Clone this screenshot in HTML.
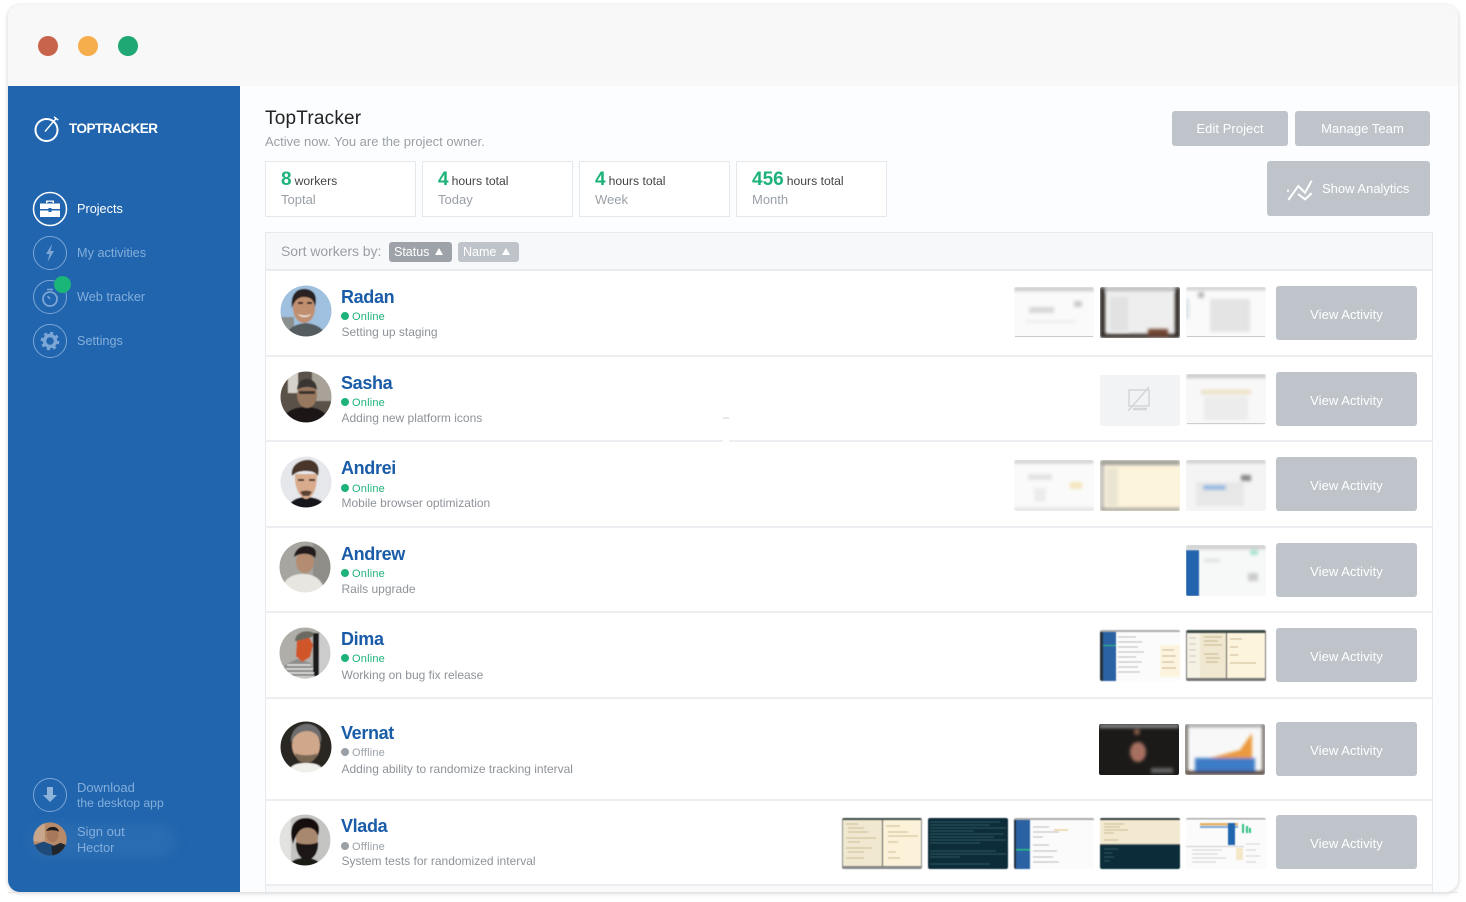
<!DOCTYPE html>
<html><head><meta charset="utf-8"><title>TopTracker</title>
<style>
html,body{margin:0;padding:0;background:#fff}
body{width:1466px;height:902px;position:relative;overflow:hidden;font-family:"Liberation Sans",sans-serif}
#win{position:absolute;left:8px;top:5px;width:1450px;height:887px;border-radius:12px;overflow:hidden;background:#fcfdfe;box-shadow:0 1px 5px rgba(0,0,0,.2)}
.a{position:absolute}
.t{position:absolute;white-space:nowrap}
.nav{font-size:12.7px;color:#84aedb;line-height:16px;left:77px}
.row{position:absolute;left:265px;width:1168px;background:#fff;border-left:1px solid #e6e9ee;border-right:1px solid #e6e9ee;border-bottom:2px solid #eceef2;box-sizing:border-box}
.btn{position:absolute;background:#bfc4ca;border-radius:3px;color:#fff;text-align:center;font-size:13px;letter-spacing:.05px}
.va{left:1276px;width:141px;height:54px;line-height:57px}
.box{position:absolute;top:161px;width:151px;height:56px;box-sizing:border-box;border:1px solid #e4e7ec;background:#fff}
.num{position:absolute;left:15px;top:6px;font-size:19px;font-weight:bold;color:#1db27a;line-height:24px;white-space:nowrap}
.num span{font-size:12.2px;font-weight:normal;color:#444;margin-left:3px}
.sub{position:absolute;left:15px;top:29px;font-size:13px;color:#9aa0a6;line-height:17px;white-space:nowrap}
.nm{position:absolute;left:341px;font-size:18px;font-weight:bold;color:#1a5ca8;line-height:22px;white-space:nowrap;letter-spacing:-.35px}
.st{position:absolute;left:352px;font-size:11px;line-height:14px;white-space:nowrap;color:#1db27a;letter-spacing:.2px}
.off{color:#9aa0a6}
.dot{position:absolute;left:341px;width:8px;height:8px;border-radius:50%;background:#1db27a}
.dotoff{background:#9aa0a6}
.ds{position:absolute;left:341.5px;font-size:12px;color:#8e9399;line-height:15px;white-space:nowrap}
.th{position:absolute;width:80px;height:51px;border-radius:2px}
.sh{filter:blur(.4px)}
.av{position:absolute;width:52px;height:52px}
</style></head><body>
<svg width="0" height="0" style="position:absolute"><defs>
<filter id="b1"><feGaussianBlur stdDeviation="1.6"/></filter>
<filter id="b2"><feGaussianBlur stdDeviation="2.2"/></filter>
<filter id="b0"><feGaussianBlur stdDeviation=".5"/></filter>
<clipPath id="cc"><circle cx="26" cy="26" r="25.5"/></clipPath>
</defs></svg>
<div id="win">
<div class="a" style="left:0;top:0;width:1450px;height:81px;background:#f8f8f8"></div>
<div class="a" style="left:0;top:81px;width:232px;height:806px;background:#2065ae"></div>
</div>
<div class="a" style="left:38px;top:36px;width:20px;height:20px;border-radius:50%;background:#c9644c"></div>
<div class="a" style="left:78px;top:36px;width:20px;height:20px;border-radius:50%;background:#f6ad4b"></div>
<div class="a" style="left:118px;top:36px;width:20px;height:20px;border-radius:50%;background:#1fa873"></div>

<svg class="a" style="left:30px;top:112px" width="32" height="32" viewBox="0 0 32 32" fill="none" stroke="#fff"><circle cx="16.500" cy="18" r="11" stroke-width="2"/><path d="M15 19.500L26.500 6M24 4.800l4.200 3.300" stroke-width="1.400"/></svg>
<div class="t" style="left:69px;top:120px;font-size:13.5px;line-height:17px;color:#fff;font-weight:bold;letter-spacing:-.5px">TOPTRACKER</div>

<svg class="a" style="left:32px;top:191px" width="36" height="36" fill="none"><circle cx="18" cy="18" r="16.500" stroke="#fff" stroke-width="1.500"/><path d="M8 12.500h20v5.500h-8.500v-1h-3v1H8zM8 19.500h8.500v1.500h3v-1.500H28V26H8zM14 12v-2.500h8V12h-1.500v-1.200h-5V12z" fill="#fff"/></svg>
<div class="t nav" style="top:201px;color:#fff">Projects</div>
<svg class="a" style="left:32px;top:235px" width="36" height="36" fill="none"><circle cx="18" cy="18" r="16.500" stroke="#7ca6d5" stroke-width="1"/><path d="M20 9l-6 10h3.500L15.500 27l6.500-11h-3.500z" fill="#7ca6d5"/></svg>
<div class="t nav" style="top:245px">My activities</div>
<svg class="a" style="left:32px;top:279px" width="36" height="36" fill="none"><circle cx="18" cy="18" r="16.500" stroke="#7ca6d5" stroke-width="1"/><circle cx="18" cy="20" r="7" stroke="#7ca6d5" stroke-width="1.800"/><path d="M15 10.500h6M18 20l-2.500-3" stroke="#7ca6d5" stroke-width="1.500"/></svg>
<div class="a" style="left:54px;top:276px;width:17px;height:17px;border-radius:50%;background:#1ab677"></div>
<div class="t nav" style="top:289px">Web tracker</div>
<svg class="a" style="left:32px;top:323px" width="36" height="36" fill="none"><circle cx="18" cy="18" r="16.500" stroke="#7ca6d5" stroke-width="1"/><circle cx="18" cy="18" r="5.500" stroke="#7ca6d5" stroke-width="3.500"/><circle cx="18" cy="18" r="7.800" stroke="#7ca6d5" stroke-width="3" stroke-dasharray="3 3.100"/></svg>
<div class="t nav" style="top:333px">Settings</div>

<svg class="a" style="left:32px;top:777px" width="36" height="36" fill="none"><circle cx="18" cy="18" r="16.500" stroke="#7ca6d5" stroke-width="1"/><path d="M15 10h6v8h4l-7 7-7-7h4z" fill="#8fb4dc"/></svg>
<div class="t nav" style="top:780px;font-size:13px">Download</div>
<div class="t nav" style="top:795px;font-size:12.2px">the desktop app</div>
<div class="a" style="left:30px;top:824px;width:145px;height:34px;border-radius:17px;background:#2a6cb2;filter:blur(5px)"></div>
<svg class="a" style="left:33px;top:822px" width="34" height="34" viewBox="0 0 52 52"><g clip-path="url(#cc)"><rect width="52" height="52" fill="#b98a6a"/><rect width="18" height="30" fill="#c9a78d"/><path d="M0 52V36l16-6 16 6 8 16z" fill="#1d4a78"/><ellipse cx="30" cy="20" rx="9" ry="11" fill="#a8785a"/><path d="M20 14c2-8 18-10 20 1-5-3-14-3-20-1z" fill="#1c1a1a"/><path d="M28 38l14-6 10 4v16H30z" fill="#20262c"/></g></svg>
<div class="t nav" style="top:824px;font-size:13px">Sign out</div>
<div class="t nav" style="top:840px">Hector</div>

<div class="t" style="left:265px;top:107px;font-size:19px;line-height:24px;color:#222;letter-spacing:.2px">TopTracker</div>
<div class="t" style="left:265px;top:133px;font-size:13px;line-height:17px;color:#9aa0a6">Active now. You are the project owner.</div>

<div class="box" style="left:265px"><div class="num">8<span>workers</span></div><div class="sub">Toptal</div></div>
<div class="box" style="left:422px"><div class="num">4<span>hours total</span></div><div class="sub">Today</div></div>
<div class="box" style="left:579px"><div class="num">4<span>hours total</span></div><div class="sub">Week</div></div>
<div class="box" style="left:736px"><div class="num">456<span>hours total</span></div><div class="sub">Month</div></div>

<div class="btn" style="left:1172px;top:111px;width:116px;height:35px;line-height:36px">Edit Project</div>
<div class="btn" style="left:1295px;top:111px;width:135px;height:35px;line-height:36px">Manage Team</div>
<div class="btn" style="left:1267px;top:161px;width:163px;height:55px"></div>
<svg class="a" style="left:1286px;top:178px" width="28" height="26" fill="none" stroke="#fff" stroke-width="2"><path d="M2.300 22l10-14 6.700 6.700 6.700-12M12 16l7 5.300 6.700-6M1 12.700h2"/></svg>
<div class="t" style="left:1322px;top:180px;font-size:13px;line-height:17px;color:#fff">Show Analytics</div>

<div class="a" style="left:265px;top:232px;width:1168px;height:39px;box-sizing:border-box;background:#f7f8fa;border:1px solid #e6e9ee;border-bottom:2px solid #e9ebef"></div>
<div class="t" style="left:281px;top:243px;font-size:14px;line-height:17px;color:#9a9fa5;letter-spacing:-.05px">Sort workers by:</div>
<div class="a" style="left:389px;top:242px;width:63px;height:20px;border-radius:3px;background:#9ea3a9;color:#fff;font-size:12.5px;line-height:20px;box-sizing:border-box;padding-left:5px;white-space:nowrap">Status</div>
<div class="a" style="left:435px;top:248px;width:0;height:0;border-left:4.500px solid transparent;border-right:4.500px solid transparent;border-bottom:7px solid #fff"></div>
<div class="a" style="left:458px;top:242px;width:61px;height:20px;border-radius:3px;background:#bfc4ca;color:#fff;font-size:12.5px;line-height:20px;box-sizing:border-box;padding-left:5px;white-space:nowrap">Name</div>
<div class="a" style="left:502px;top:248px;width:0;height:0;border-left:4.500px solid transparent;border-right:4.500px solid transparent;border-bottom:7px solid #fff"></div>

<div class="row" style="top:271px;height:86px"></div>
<div class="row" style="top:357px;height:85px"></div>
<div class="row" style="top:442px;height:86px"></div>
<div class="row" style="top:528px;height:85px"></div>
<div class="row" style="top:613px;height:86px"></div>
<div class="row" style="top:699px;height:102px"></div>
<div class="row" style="top:801px;height:85px"></div>
<div class="a" style="left:723px;top:439px;width:6px;height:5px;background:#fff"></div>
<div class="a" style="left:723px;top:417px;width:6px;height:2px;background:#e8e8e8"></div>
<div class="a" style="left:265px;top:886px;width:1168px;height:6px;background:#f7f9fb;border-left:1px solid #e6e9ee;border-right:1px solid #e6e9ee;box-sizing:border-box"></div>
<div class="a" style="left:8px;top:892px;width:1450px;height:1px;background:#e4e4e4"></div>

<!-- Avatars -->
<svg class="av" style="left:280px;top:285px" viewBox="0 0 52 52"><g clip-path="url(#cc)" filter="url(#b0)"><rect width="52" height="52" fill="#9fc0de"/><rect y="32" width="14" height="20" fill="#8b8f8d"/><path d="M6 52c2-10 10-13 20-14 10 1 18 5 20 14z" fill="#555b61"/><ellipse cx="24" cy="23" rx="11" ry="15" fill="#c08f70"/><path d="M12 23C10 8 18 3 26 4c8 1 12 7 9 18-1-7-4-10-11-10-6 0-10 4-12 11z" fill="#2a2420"/><path d="M18 18h5M27 18h5" stroke="#2a2420" stroke-width="2"/><path d="M18 29c4 2 9 2 13 0-2 4-11 4-13 0z" fill="#f0e4dc"/></g></svg>
<svg class="av" style="left:280px;top:371px" viewBox="0 0 52 52"><g clip-path="url(#cc)" filter="url(#b0)"><rect width="52" height="52" fill="#5a5148"/><rect x="32" width="20" height="30" fill="#a8a298"/><rect x="8" width="10" height="22" fill="#d6d2ca"/><path d="M2 52c2-12 12-16 24-16s22 5 24 16z" fill="#1a1918"/><ellipse cx="27" cy="24" rx="10" ry="13" fill="#98775f"/><path d="M17 19c0-8 5-11 10-11s10 3 10 11c-4-4-15-4-20 0z" fill="#393532"/><rect x="19" y="20" width="16" height="3" fill="#39302a"/></g></svg>
<svg class="av" style="left:280px;top:456px" viewBox="0 0 52 52"><g clip-path="url(#cc)" filter="url(#b0)"><rect width="52" height="52" fill="#e5e7ea"/><path d="M8 52c2-8 10-11 18-11 9 0 18 3 20 11z" fill="#17171a"/><path d="M15 18c-1 14 5 24 11 25 7-1 11-10 11-25z" fill="#d9ab8d"/><path d="M12 20C10 8 22 3 30 4c8 2 10 8 8 16-2-3-5-5-12-5-6 0-10 1-14 5z" fill="#4a3529"/><path d="M18 24h6M29 24h6" stroke="#3a2a20" stroke-width="2"/><path d="M20 36c4-2 8-2 12 0l-3 4h-6z" fill="#5a4234"/></g></svg>
<svg class="av" style="left:279px;top:541px" viewBox="0 0 52 52"><g clip-path="url(#cc)" filter="url(#b0)"><rect width="52" height="52" fill="#a7a5a0"/><rect x="34" width="18" height="52" fill="#8f8d88"/><path d="M2 52c2-14 10-19 22-19s20 6 22 19z" fill="#e8e6e0"/><ellipse cx="26" cy="21" rx="9" ry="11" fill="#b38c71"/><path d="M15 16C16 6 26 3 33 6c4 2 5 6 3 11-4-5-14-6-21-1z" fill="#231e1b"/></g></svg>
<svg class="av" style="left:279px;top:627px" viewBox="0 0 52 52"><g clip-path="url(#cc)" filter="url(#b0)"><rect width="52" height="52" fill="#b0aea8"/><rect x="34" y="6" width="6" height="46" fill="#1c1b1b"/><rect x="40" y="6" width="12" height="46" fill="#ccc"/><path d="M6 52V38l12-6 14 4 4 16z" fill="#8d8d8b"/><path d="M8 38h24M7 42h27M6 46h29M6 50h30" stroke="#e6e6e4" stroke-width="1.500"/><path d="M18 12l12-2 4 8-3 12-8 5-6-6z" fill="#d0562a"/><path d="M16 14C16 5 28 2 35 6l-2 4-15 4z" fill="#6b6a60"/></g></svg>
<svg class="av" style="left:280px;top:721px" viewBox="0 0 52 52"><g clip-path="url(#cc)" filter="url(#b0)"><rect width="52" height="52" fill="#2c2620"/><path d="M8 52c2-8 8-10 18-10s16 2 18 10z" fill="#f0efeb"/><ellipse cx="26" cy="24" rx="14" ry="17" fill="#cfa78a"/><path d="M11 22C10 8 20 3 27 3s16 5 14 19c-2-8-7-12-14-12S14 14 11 22z" fill="#6e6e70"/><path d="M15 32c4 3 18 3 22 0-1 8-7 10-11 10s-10-2-11-10z" fill="#7a6753"/></g></svg>
<svg class="av" style="left:279px;top:814px" viewBox="0 0 52 52"><g clip-path="url(#cc)" filter="url(#b0)"><rect width="52" height="52" fill="#c4c5c3"/><rect width="12" height="52" fill="#e2e3e1"/><path d="M10 52c2-6 8-8 16-8s14 2 16 8z" fill="#1f1b19"/><ellipse cx="28" cy="24" rx="11" ry="13" fill="#a98870"/><path d="M14 30C8 10 18 4 27 4c9 0 16 6 12 18-2-6-6-9-13-8-6 1-9 7-12 16z" fill="#15110f"/><path d="M17 28c4 3 18 3 22 0 1 9-4 18-11 18s-12-9-11-18z" fill="#1d1613"/></g></svg>

<!-- Names -->
<div class="nm" style="top:286px">Radan</div><div class="dot" style="top:312px"></div><div class="st" style="top:310px">Online</div><div class="ds" style="top:325px">Setting up staging</div>
<div class="nm" style="top:372px">Sasha</div><div class="dot" style="top:398px"></div><div class="st" style="top:396px">Online</div><div class="ds" style="top:411px">Adding new platform icons</div>
<div class="nm" style="top:457px">Andrei</div><div class="dot" style="top:484px"></div><div class="st" style="top:482px">Online</div><div class="ds" style="top:496px">Mobile browser optimization</div>
<div class="nm" style="top:543px">Andrew</div><div class="dot" style="top:569px"></div><div class="st" style="top:567px">Online</div><div class="ds" style="top:582px">Rails upgrade</div>
<div class="nm" style="top:628px">Dima</div><div class="dot" style="top:654px"></div><div class="st" style="top:652px">Online</div><div class="ds" style="top:668px">Working on bug fix release</div>
<div class="nm" style="top:722px">Vernat</div><div class="dot dotoff" style="top:748px"></div><div class="st off" style="top:746px">Offline</div><div class="ds" style="top:762px">Adding ability to randomize tracking interval</div>
<div class="nm" style="top:815px">Vlada</div><div class="dot dotoff" style="top:842px"></div><div class="st off" style="top:840px">Offline</div><div class="ds" style="top:854px">System tests for randomized interval</div>

<!-- Buttons -->
<div class="btn va" style="top:286px">View Activity</div>
<div class="btn va" style="top:372px">View Activity</div>
<div class="btn va" style="top:457px">View Activity</div>
<div class="btn va" style="top:543px">View Activity</div>
<div class="btn va" style="top:628px">View Activity</div>
<div class="btn va" style="top:722px">View Activity</div>
<div class="btn va" style="top:815px">View Activity</div>

<!-- Row 1 thumbs -->
<svg class="th" style="left:1014px;top:287px" viewBox="0 0 80 51"><rect width="80" height="51" fill="#fafafa"/><g filter="url(#b1)"><rect width="80" height="4" fill="#c8c8c8"/><rect x="15" y="20" width="25" height="6" fill="#d8d8d8"/><rect x="60" y="14" width="8" height="6" fill="#ccc"/><rect x="12" y="33" width="50" height="3" fill="#eee"/></g><rect x="1" y="49" width="78" height="1" fill="#ccc"/></svg>
<svg class="th" style="left:1100px;top:287px" viewBox="0 0 80 51"><rect width="80" height="51" fill="#eee"/><g filter="url(#b1)"><rect width="80" height="4" fill="#bbb"/><rect x="0" width="5" height="51" fill="#2a201c"/><rect x="75" width="5" height="51" fill="#2a201c"/><rect y="47" width="80" height="4" fill="#2a201c"/><rect x="48" y="42" width="20" height="7" fill="#704530"/><rect x="10" y="10" width="18" height="34" fill="#e2e2e2"/></g></svg>
<svg class="th" style="left:1186px;top:287px" viewBox="0 0 80 51"><rect width="80" height="51" fill="#fafafa"/><g filter="url(#b1)"><rect width="80" height="3" fill="#c6c6c6"/><rect x="12" y="5" width="6" height="6" fill="#bbb"/><rect x="24" y="12" width="40" height="33" fill="#e4e4e4"/><rect x="0" y="12" width="3" height="20" fill="#d3dee6"/></g><rect x="1" y="49" width="78" height="1" fill="#ccc"/></svg>
<!-- Row 2 thumbs -->
<div class="th" style="left:1100px;top:375px;background:#f2f3f4"></div>
<svg class="a" style="left:1125px;top:385px" width="30" height="28" fill="none" stroke="#d5d6d7"><path d="M4 5h20v16H4z" stroke-width="1.500"/><path d="M24 2L3 26" stroke-width="1.500"/><path d="M8 24h14" stroke-width="2.500"/></svg>
<svg class="th" style="left:1186px;top:374px" viewBox="0 0 80 51"><rect width="80" height="51" fill="#f8f8f8"/><g filter="url(#b1)"><rect width="80" height="4" fill="#c6c6c6"/><rect x="15" y="16" width="50" height="4" fill="#eadfc0"/><rect x="18" y="22" width="44" height="24" fill="#ececec"/></g><rect x="1" y="49" width="78" height="1" fill="#ccc"/></svg>
<!-- Row 3 thumbs -->
<svg class="th" style="left:1014px;top:460px" viewBox="0 0 80 51"><rect width="80" height="51" fill="#fafafa"/><g filter="url(#b1)"><rect width="80" height="3" fill="#c6c6c6"/><rect x="14" y="14" width="24" height="6" fill="#e3e3e3"/><rect x="56" y="22" width="12" height="7" fill="#f4e6be"/><rect x="20" y="28" width="12" height="14" fill="#ececec"/><rect x="0" y="48" width="80" height="3" fill="#ddd"/></g></svg>
<svg class="th" style="left:1100px;top:460px" viewBox="0 0 80 51"><rect width="80" height="51" fill="#fdf4dc"/><g filter="url(#b1)"><rect width="80" height="5" fill="#9c9c98"/><rect y="5" width="4" height="46" fill="#bbb"/><rect y="48" width="80" height="3" fill="#9c9c98"/><rect x="6" y="8" width="12" height="38" fill="#eae5d2"/></g></svg>
<svg class="th" style="left:1186px;top:460px" viewBox="0 0 80 51"><rect width="80" height="51" fill="#f4f4f4"/><g filter="url(#b1)"><rect width="80" height="3" fill="#c6c6c6"/><rect x="10" y="22" width="48" height="24" fill="#e7e7e7"/><rect x="17" y="25" width="23" height="5" rx="2" fill="#93b9e0"/><rect x="55" y="15" width="10" height="6" fill="#888"/></g></svg>
<!-- Row 4 thumb -->
<svg class="th" style="left:1186px;top:545px" viewBox="0 0 80 51"><rect width="80" height="51" fill="#f7f8f8"/><g filter="url(#b0)"><rect y="5" width="13" height="46" fill="#2065ae"/></g><g filter="url(#b1)"><rect width="80" height="4" fill="#c8c8c8"/><rect x="64" y="5" width="8" height="5" rx="2" fill="#a5e2c9"/><rect x="18" y="14" width="16" height="3" fill="#ddd"/><rect x="62" y="28" width="10" height="8" fill="#ccc"/></g></svg>
<!-- Row 5 thumbs -->
<svg class="th sh" style="left:1100px;top:630px" viewBox="0 0 80 51"><rect width="80" height="51" fill="#fbfbfb"/><rect y="0" width="80" height="2" fill="#aaa"/><rect y="2" width="3" height="49" fill="#25313d"/><rect x="3" y="2" width="13" height="49" fill="#2b62a4"/><rect x="3" y="15" width="13" height="1" fill="#2bc080"/><path d="M18 7h18M18 12h24M18 17h20M18 22h26M18 27h18M18 32h24M18 37h20M18 42h22" stroke="#a8a8a8" stroke-width=".8"/><rect x="60" y="15" width="20" height="32" fill="#fcf4de"/><path d="M62 20h12M62 26h14M62 32h12M62 38h14" stroke="#bb9a7a" stroke-width=".8"/></svg>
<svg class="th sh" style="left:1186px;top:630px" viewBox="0 0 80 51"><rect width="80" height="51" fill="#fdf4dd"/><rect width="80" height="3" fill="#3d4a47"/><rect y="0" width="1" height="51" fill="#777"/><rect x="79" width="1" height="51" fill="#777"/><rect y="48" width="80" height="3" fill="#777"/><rect x="1" y="3" width="13" height="45" fill="#f5f1e3"/><rect x="14" y="3" width="26" height="45" fill="#efe7cf"/><rect x="40" y="3" width="1" height="45" fill="#666"/><path d="M18 7h18M18 11h14M18 15h18M18 24h14M20 28h14M20 32h12M44 9h12M44 17h8M44 25h8M44 33h26" stroke="#b8a27a" stroke-width=".8"/><path d="M3 8h7M3 14h7M3 20h7M3 26h7M3 32h7" stroke="#bbb" stroke-width=".8"/></svg>
<!-- Row 6 thumbs -->
<svg class="th" style="left:1099px;top:724px" viewBox="0 0 80 51"><rect width="80" height="51" fill="#1c1a18"/><g filter="url(#b1)"><rect width="80" height="4" fill="#888"/><ellipse cx="39" cy="28" rx="8" ry="10" fill="#a87060"/><circle cx="38" cy="8" r="3" fill="#8a5e48"/><rect x="52" y="44" width="22" height="5" fill="#666"/></g></svg>
<svg class="th" style="left:1185px;top:724px" viewBox="0 0 80 51"><rect width="80" height="51" fill="#f8f8f8"/><g filter="url(#b1)"><rect width="80" height="3" fill="#999"/><rect width="2.5" height="51" fill="#4a3c34"/><rect x="77.5" width="2.500" height="51" fill="#4a3c34"/><path d="M25 34l30-8 12-17v25z" fill="#eb9a3c"/><rect x="10" y="34" width="60" height="13" fill="#3e7cc6"/><rect y="47" width="80" height="4" fill="#4c3a32"/></g></svg>
<!-- Row 7 thumbs -->
<svg class="th sh" style="left:842px;top:818px" viewBox="0 0 80 51"><rect width="80" height="51" fill="#fbf2d9"/><rect width="80" height="2" fill="#3c4a48"/><rect x="0" width="1" height="51" fill="#888"/><rect x="79" width="1" height="51" fill="#888"/><rect y="48" width="80" height="3" fill="#888"/><rect x="1" y="2" width="40" height="46" fill="#f0e8d0"/><rect x="40" y="2" width="1" height="46" fill="#666"/><path d="M4 6h12M6 10h16M6 14h20M4 20h30M6 24h12M4 30h26M6 34h16M4 40h18M44 8h14M46 14h20M46 18h30M46 24h10M46 34h8M46 40h12" stroke="#c0aa80" stroke-width=".8"/></svg>
<svg class="th sh" style="left:928px;top:818px" viewBox="0 0 80 51"><rect width="80" height="51" fill="#0c2c3a"/><path d="M2 4h70M2 7h60M2 10h76M2 13h44M2 16h74M2 19h64M2 22h76M2 25h50M2 33h66M2 36h76M2 39h30M2 46h60" stroke="#3d6a72" stroke-width=".8"/></svg>
<svg class="th sh" style="left:1014px;top:818px" viewBox="0 0 80 51"><rect width="80" height="51" fill="#fbfbfb"/><rect width="80" height="2" fill="#aaa"/><rect y="2" width="2" height="49" fill="#25313d"/><rect x="2" y="2" width="14" height="49" fill="#2b62a4"/><rect x="2" y="31" width="14" height="1.500" fill="#2bc080"/><path d="M19 9h16M19 14h26M19 19h10M19 27h16M19 33h24M19 39h20M19 44h26" stroke="#a8a8a8" stroke-width=".8"/><path d="M40 12h14" stroke="#e5c070" stroke-width="1"/></svg>
<svg class="th sh" style="left:1100px;top:818px" viewBox="0 0 80 51"><rect width="80" height="51" fill="#0c2c3a"/><rect y="0" width="80" height="26" fill="#f2e9d0"/><rect width="80" height="2" fill="#2f3f3c"/><path d="M4 6h20M4 9h16M4 12h24M4 15h10M4 22h14" stroke="#c0aa80" stroke-width=".8"/><rect y="26" width="80" height="1" fill="#777"/><path d="M4 31h14M4 35h8M4 39h10M4 43h6" stroke="#3d6a72" stroke-width=".8"/></svg>
<svg class="th sh" style="left:1186px;top:818px" viewBox="0 0 80 51"><rect width="80" height="51" fill="#fbfbfb"/><rect width="80" height="1.500" fill="#aaa"/><rect x="14" y="5" width="38" height="2.500" fill="#e5b366"/><rect x="14" y="8" width="38" height="2" fill="#7fa8d8"/><rect x="42" y="5" width="7" height="22" fill="#2065ae"/><rect x="56" y="6" width="2" height="9" fill="#2bc080"/><rect x="60" y="8" width="2" height="7" fill="#2bc080"/><rect x="63" y="10" width="2" height="5" fill="#2bc080"/><rect y="28" width="58" height="1" fill="#ccc"/><path d="M6 32h30M6 36h26M6 40h34M6 44h24M60 26h14M60 32h10M60 38h14M60 44h10" stroke="#c4c4c4" stroke-width=".8"/><rect x="50" y="30" width="7" height="12" fill="#f5e8c6"/></svg>
</body></html>
